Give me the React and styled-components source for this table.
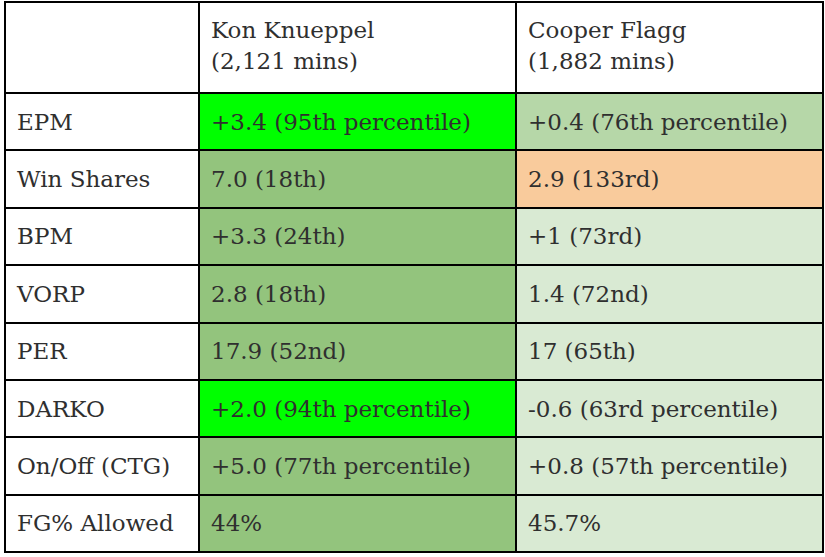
import React from 'react';
import styled, { createGlobalStyle } from 'styled-components';

const GlobalStyle = createGlobalStyle`
	html, body {
		margin: 0;
		padding: 0;
		background: #ffffff;
	}
	body {
		font-family: 'DejaVu Serif', 'Liberation Serif', serif;
	}
`;

const Page = styled.div`
	padding: 1px 0 0 4px;
`;

const Table = styled.table`
	border-collapse: collapse;
	table-layout: fixed;
	width: 820px;
	color: #2f2f2f;
	font-size: 23px;
`;

const Col = styled.col`
	width: ${(p) => p.$w}px;
`;

const HeadCell = styled.th`
	border: 2px solid #000;
	height: 85px;
	padding: 0 11px 4px;
	text-align: left;
	vertical-align: middle;
	font-weight: normal;
	line-height: 31px;
	background: #fff;
`;

const Cell = styled.td`
	border: 2px solid #000;
	height: 55.4px;
	padding: 0 11px;
	text-align: left;
	vertical-align: middle;
	white-space: nowrap;
	background: ${(p) => p.$bg || '#fff'};
`;

const colors = {
	bright: '#00ff00',
	mid: '#93c47d',
	light: '#b6d7a8',
	pale: '#d9ead3',
	orange: '#f9cb9c',
};

const rows = [
	{ label: 'EPM', a: ['+3.4 (95th percentile)', 'bright'], b: ['+0.4 (76th percentile)', 'light'] },
	{ label: 'Win Shares', a: ['7.0 (18th)', 'mid'], b: ['2.9 (133rd)', 'orange'] },
	{ label: 'BPM', a: ['+3.3 (24th)', 'mid'], b: ['+1 (73rd)', 'pale'] },
	{ label: 'VORP', a: ['2.8 (18th)', 'mid'], b: ['1.4 (72nd)', 'pale'] },
	{ label: 'PER', a: ['17.9 (52nd)', 'mid'], b: ['17 (65th)', 'pale'] },
	{ label: 'DARKO', a: ['+2.0 (94th percentile)', 'bright'], b: ['-0.6 (63rd percentile)', 'pale'] },
	{ label: 'On/Off (CTG)', a: ['+5.0 (77th percentile)', 'mid'], b: ['+0.8 (57th percentile)', 'pale'] },
	{ label: 'FG% Allowed', a: ['44%', 'mid'], b: ['45.7%', 'pale'] },
];

export default function App() {
	return (
		<Page>
			<GlobalStyle />
			<Table>
				<colgroup>
					<Col $w={194} />
					<Col $w={317} />
					<Col $w={307} />
				</colgroup>
				<thead>
					<tr>
						<HeadCell />
						<HeadCell>
							Kon Knueppel
							<br />
							(2,121 mins)
						</HeadCell>
						<HeadCell>
							Cooper Flagg
							<br />
							(1,882 mins)
						</HeadCell>
					</tr>
				</thead>
				<tbody>
					{rows.map((r) => (
						<tr key={r.label}>
							<Cell>{r.label}</Cell>
							<Cell $bg={colors[r.a[1]]}>{r.a[0]}</Cell>
							<Cell $bg={colors[r.b[1]]}>{r.b[0]}</Cell>
						</tr>
					))}
				</tbody>
			</Table>
		</Page>
	);
}
